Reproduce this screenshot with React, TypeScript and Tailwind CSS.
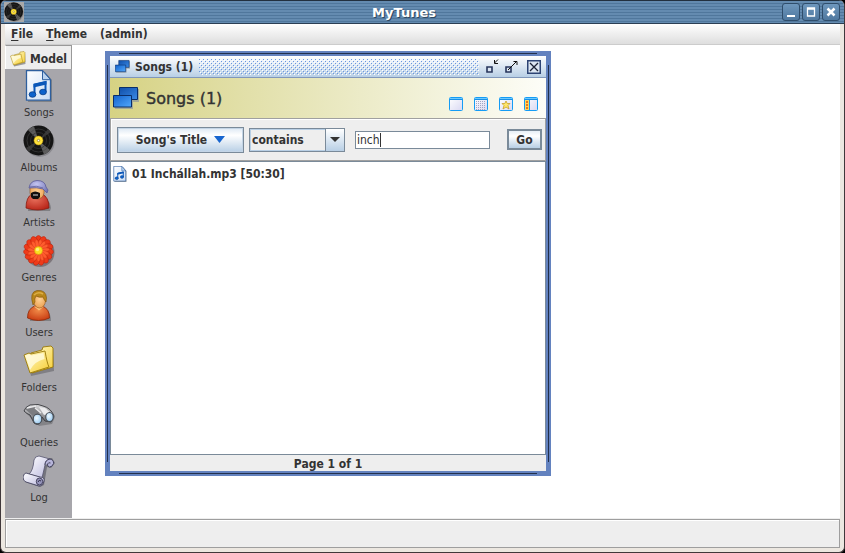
import type { ReactNode } from "react";

function Gradients() {
  return (
    <svg width="0" height="0" className="absolute" aria-hidden="true">
      <defs>
        <linearGradient id="paper" x1="0" y1="0" x2="1" y2="1">
          <stop offset="0" stopColor="#ffffff" />
          <stop offset="1" stopColor="#c9dcf4" />
        </linearGradient>
        <radialGradient id="red" cx=".4" cy=".3" r=".8">
          <stop offset="0" stopColor="#e8705c" />
          <stop offset="1" stopColor="#b52014" />
        </radialGradient>
        <radialGradient id="orange" cx=".5" cy=".3" r=".8">
          <stop offset="0" stopColor="#f08a48" />
          <stop offset="1" stopColor="#c4330c" />
        </radialGradient>
        <radialGradient id="skin" cx=".5" cy=".4" r=".7">
          <stop offset="0" stopColor="#ffd398" />
          <stop offset="1" stopColor="#e89a48" />
        </radialGradient>
        <radialGradient id="cap" cx=".4" cy=".3" r=".8">
          <stop offset="0" stopColor="#c4c5f2" />
          <stop offset="1" stopColor="#6d6fae" />
        </radialGradient>
        <linearGradient id="yellow" x1="0" y1="0" x2="1" y2="1">
          <stop offset="0" stopColor="#fffbd0" />
          <stop offset="1" stopColor="#f7cf35" />
        </linearGradient>
        <linearGradient id="metal" x1="0" y1="0" x2="0" y2="1">
          <stop offset="0" stopColor="#dadadc" />
          <stop offset="1" stopColor="#5d5e63" />
        </linearGradient>
        <radialGradient id="lens" cx=".4" cy=".4" r=".7">
          <stop offset="0" stopColor="#f0faff" />
          <stop offset="1" stopColor="#8fc4f0" />
        </radialGradient>
        <linearGradient id="scroll" x1="0" y1="0" x2="1" y2="1">
          <stop offset="0" stopColor="#ffffff" />
          <stop offset="1" stopColor="#b9b7dd" />
        </linearGradient>
        <linearGradient id="blueback" x1="0" y1="0" x2="1" y2="1">
          <stop offset="0" stopColor="#0f4ea8" />
          <stop offset="1" stopColor="#3b8ae6" />
        </linearGradient>
        <linearGradient id="bluefront" x1="0" y1="0" x2="1" y2="1">
          <stop offset="0" stopColor="#1262cc" />
          <stop offset="1" stopColor="#52a8fb" />
        </linearGradient>
        <linearGradient id="pane" x1="0" y1="0" x2="1" y2="1">
          <stop offset="0" stopColor="#ffffff" />
          <stop offset="1" stopColor="#d9d8f2" />
        </linearGradient>
      </defs>
    </svg>
  );
}

function VinylIcon({ size }: { size: number }) {
  return (
    <svg width={size} height={size} viewBox="0 0 32 32" aria-hidden="true">
      <circle cx="16.6" cy="17" r="15" fill="#77777b" opacity=".6" />
      <circle cx="15.5" cy="15.5" r="15" fill="#151515" />
      <path d="M15.500 15.500L5 5a15 15 0 0 1 6-3.700zM15.500 15.500L27 25a15 15 0 0 1-6 4.500z" fill="#5c5c5c" />
      <path d="M15.500 15.500L25 4l3 3zM15.500 15.500L3 23l3 4z" fill="#383838" />
      <circle cx="15.500" cy="15.500" r="11.500" fill="none" stroke="#444" strokeWidth=".6" />
      <circle cx="15.500" cy="15.500" r="8" fill="none" stroke="#333" strokeWidth=".8" />
      <circle cx="15.500" cy="15.500" r="4.500" fill="#ffe23c" stroke="#b58f00" strokeWidth=".5" />
      <circle cx="15.500" cy="15.500" r="1.200" fill="#fff" stroke="#7a5f00" strokeWidth=".6" />
    </svg>
  );
}

function SongIcon({ size }: { size: number }) {
  return (
    <svg width={size} height={size} viewBox="0 0 32 32" aria-hidden="true">
      <path d="M5 2h17l7 8v22H5z" fill="#666a70" opacity=".6" />
      <path d="M3.500.700h16l8 9v20.500h-24z" fill="url(#paper)" stroke="#2e5f9e" strokeWidth="1.300" />
      <path d="M19.500.700v9h8z" fill="#b9d2ee" stroke="#2e5f9e" />
      <path d="M11.500 24V14.500L22.500 12v10" fill="none" stroke="#0b57b8" strokeWidth="2" />
      <path d="M10.500 14l13-3v3.500l-13 3z" fill="#0b57b8" />
      <ellipse cx="9.500" cy="24.500" rx="3.400" ry="2.800" fill="#0c62cc" stroke="#083c86" strokeWidth=".8" />
      <ellipse cx="20" cy="22" rx="3.400" ry="2.800" fill="#0c62cc" stroke="#083c86" strokeWidth=".8" />
    </svg>
  );
}

function ArtistIcon() {
  return (
    <svg width="32" height="32" viewBox="0 0 32 32" aria-hidden="true">
      <path d="M5 31q0-12 9-14 13 0 14 11l-1 3z" fill="#606064" opacity=".55" />
      <path d="M3 28Q3 17 9 14h10q7 3 7 14-11 4-23 0z" fill="url(#red)" stroke="#8a1c10" strokeWidth=".8" />
      <path d="M7 7h14v6q-1 6-7 6t-7-6z" fill="url(#skin)" stroke="#8b5120" strokeWidth=".6" />
      <path d="M6 8Q7 1 14 .500q8 0 9 6.500l2 3-1 3-4-4q-6-2-14-1z" fill="url(#cap)" stroke="#5a5b99" strokeWidth=".8" />
      <path d="M7 7q6-2 13 1" fill="none" stroke="#5f61a0" strokeWidth=".8" />
      <path d="M8 13q4-3 9 0v4l-2 2h-5l-2-2z" fill="#120f0e" />
      <path d="M10 15h5" stroke="#d8d8d8" strokeWidth="1.200" />
    </svg>
  );
}

const petals = [0, 24, 48, 72, 96, 120, 144, 168, 192, 216, 240, 264, 288, 312, 336];

function GenreIcon() {
  return (
    <svg width="32" height="32" viewBox="0 0 32 32" aria-hidden="true">
      <circle cx="17" cy="17.500" r="14.500" fill="#6b6366" opacity=".7" />
      {petals.map((a) => (
        <ellipse key={a} cx="15.500" cy="6" rx="3.500" ry="5.500" fill="#ee3a1a" stroke="#b91f08" strokeWidth=".5" transform={`rotate(${a} 15.500 15.500)`} />
      ))}
      {petals.map((a) => (
        <ellipse key={a} cx="15.500" cy="9" rx="1.800" ry="4.500" fill="#ff5c2e" stroke="#d23a16" strokeWidth=".4" transform={`rotate(${a + 12} 15.500 15.500)`} />
      ))}
      <circle cx="15.500" cy="15.500" r="4" fill="#f9df21" stroke="#d79a05" strokeWidth=".6" />
      <circle cx="14.500" cy="14.500" r="1.700" fill="#fff27a" />
    </svg>
  );
}

function UserIcon() {
  return (
    <svg width="32" height="32" viewBox="0 0 32 32" aria-hidden="true">
      <path d="M7 31q0-12 9-14 12 1 12 14z" fill="#606064" opacity=".55" />
      <path d="M4.500 28q0-9 7-12h8q7 3 7 12-11 5-22 0z" fill="url(#orange)" stroke="#8c2808" strokeWidth=".8" />
      <path d="M11 16.500l5 4 5-4z" fill="#fbc27a" />
      <ellipse cx="16.500" cy="10.500" rx="6" ry="7.500" fill="url(#skin)" stroke="#955419" strokeWidth=".6" />
      <path d="M10 15Q6 2 14 .500q9-1 9.500 7.500l-.5 4q-2-2-3-5-4 1-7-1-2 3-1 6z" fill="#b8861a" stroke="#7f5307" strokeWidth=".6" />
      <path d="M11 5q4-4 9-1" fill="none" stroke="#dcae44" strokeWidth="1.500" />
    </svg>
  );
}

function FolderIcon({ size }: { size: number }) {
  return (
    <svg width={size} height={size} viewBox="0 0 32 32" aria-hidden="true">
      <path d="M4 12l17-5 1-4 8 1 1 22-23 5z" fill="#66666a" opacity=".6" />
      <path d="M8 8l11-3 1-3 8-1 2 2v19L9 28z" fill="url(#yellow)" stroke="#9a7808" strokeWidth=".9" />
      <path d="M1 10l5-2 2 1 14-3q2 12 4 16L7 28z" fill="url(#yellow)" stroke="#9a7808" strokeWidth=".9" />
      <path d="M2.500 10.500l4-1 2 1 12-2.500 1 6Q12 16 7 25z" fill="#fffbe0" opacity=".8" />
    </svg>
  );
}

function QueryIcon() {
  return (
    <svg width="32" height="32" viewBox="0 0 32 32" aria-hidden="true">
      <path d="M3 13l18-6 11 10-3 7-13 2z" fill="#606064" opacity=".5" />
      <path d="M1 11q1-4 6-6l8-.500 5 1.500q8 2 11 10l-3 6-6-1-3-4-1 5q-3 4-7 1l-4-8q-3-1-6-4z" fill="url(#metal)" stroke="#37383c" strokeWidth=".9" />
      <path d="M2 9l9-3 6 7-7 3z" fill="#7b7c80" />
      <path d="M16 7l6 1 6 5-7 2z" fill="#ececee" />
      <path d="M4 8l9-2M12 8l6 5" stroke="#e8e8ea" strokeWidth="1.400" />
      <ellipse cx="14.500" cy="19" rx="4.300" ry="4.800" fill="url(#lens)" stroke="#4b5158" strokeWidth="1.200" />
      <ellipse cx="26.500" cy="17" rx="3.800" ry="4.500" fill="url(#lens)" stroke="#4b5158" strokeWidth="1.200" />
    </svg>
  );
}

function LogIcon() {
  return (
    <svg width="32" height="32" viewBox="0 0 32 32" aria-hidden="true">
      <path d="M13 3h16l3 5-4 5-4-1-3 18-4 2-15-5 2-5 6 1z" fill="#4b4b57" opacity=".55" />
      <path d="M11 5q1-4 5-4l11 3q-5 1-5 6l-3 13-13-4q4-3 5-14z" fill="url(#scroll)" stroke="#56546f" strokeWidth=".8" />
      <path d="M22 10q0-5 5-6 4 1 3.500 4.500-1 3.500-4 3.500-2.500-.500-2-3 1-2 3-1" fill="#b7b5da" stroke="#474661" />
      <path d="M3 18l14 4q5 0 4 4-1 5-5 5L3 27q-3-1-3-5 1-4 3-4z" fill="url(#scroll)" stroke="#474661" strokeWidth=".9" />
      <ellipse cx="16.500" cy="26.500" rx="3.200" ry="3.500" fill="#9795bd" stroke="#393851" strokeWidth=".9" />
      <path d="M15 27q1-3 3-1" fill="none" stroke="#2f2e48" />
    </svg>
  );
}

function WindowsIcon({ size }: { size: number }) {
  return (
    <svg width={size} height={size} viewBox="0 0 26 26" aria-hidden="true">
      <path d="M8 4h18v13H8zM2 12h18v12H2z" fill="#8e979d" opacity=".7" />
      <path d="M6.500 2.500h18v12h-18z" fill="url(#blueback)" stroke="#0a2e69" />
      <path d="M.500 10.500h18v11.500H.500z" fill="url(#bluefront)" stroke="#0a2e69" />
    </svg>
  );
}

type ViewKind = "blank" | "grid" | "star" | "detail";

function ViewIcon({ kind }: { kind: ViewKind }) {
  return (
    <svg width="14" height="14" viewBox="0 0 14 14" aria-hidden="true">
      <rect x=".5" y=".5" width="13" height="13" rx="1" fill="url(#pane)" stroke="#159cf5" />
      <path d="M1 1h12v1H1z" fill="#6ccaff" />
      <path d="M1 2h12v1H1z" fill="#1a8fe6" />
      {kind === "grid" && <path d="M2 4.500h10M2 6.500h10M2 8.500h10M2 10.500h10M2 12.500h10" stroke="#a3a5c4" strokeDasharray="1 1" />}
      {kind === "star" && <path d="M7 4l1.200 2.500H11L9 8.500l1 3.500-3-2-3 2 1-3.500-2-2h2.800z" fill="#ffe76a" stroke="#c9a028" strokeWidth=".8" />}
      {kind === "detail" && (
        <>
          <path d="M1 3h4v10H1z" fill="#ffd65c" />
          <path d="M2 4h2v2H2zM2 7h2v2H2zM2 10h2v2H2z" fill="#e77822" />
          <path d="M5.500 3v10" stroke="#159cf5" />
        </>
      )}
    </svg>
  );
}

const sections: { name: string; icon: ReactNode }[] = [
  { name: "Songs", icon: <SongIcon size={32} /> },
  { name: "Albums", icon: <VinylIcon size={32} /> },
  { name: "Artists", icon: <ArtistIcon /> },
  { name: "Genres", icon: <GenreIcon /> },
  { name: "Users", icon: <UserIcon /> },
  { name: "Folders", icon: <FolderIcon size={32} /> },
  { name: "Queries", icon: <QueryIcon /> },
  { name: "Log", icon: <LogIcon /> },
];

const views: { kind: ViewKind; label: string }[] = [
  { kind: "blank", label: "Plain view" },
  { kind: "grid", label: "Grid view" },
  { kind: "star", label: "Favourites view" },
  { kind: "detail", label: "Detail view" },
];

const captions: { label: string; icon: ReactNode }[] = [
  { label: "Minimize", icon: <path d="M4 11h8v2H4z" fill="#fff" /> },
  { label: "Maximize", icon: <path d="M4.500 4h7v8h-7zM4 5h8" fill="none" stroke="#fff" strokeWidth="1.300" /> },
  { label: "Close", icon: <path d="M4.500 4.500l7 7M11.500 4.500l-7 7" stroke="#fff" strokeWidth="2.500" /> },
];

function TitleBar() {
  return (
    <header className="flex h-6 shrink-0 items-center justify-between border-t border-b border-t-[#22303f] border-b-[#2b3f54] bg-[repeating-linear-gradient(to_bottom,#648bb0_0px,#648bb0_2px,#50779c_2px,#50779c_3px)] pr-1 pl-[3px]">
      <span className="flex size-5 items-center justify-center bg-[#a9a9a9]">
        <VinylIcon size={20} />
      </span>
      <h1 className="flex-1 pt-[2px] pl-[2px] text-center font-['DejaVu_Sans',sans-serif] text-[13px] font-bold text-white [text-shadow:1px_1px_0_#2f4861]">MyTunes</h1>
      <div className="flex gap-[2px]">
        {captions.map((c) => (
          <button key={c.label} aria-label={c.label} className="flex size-[18px] items-center justify-center rounded-[3px] border border-[#2f4d6b] bg-linear-to-b from-[#6e97bd] to-[#4f789f]">
            <svg width="16" height="16" viewBox="0 0 16 16" aria-hidden="true">{c.icon}</svg>
          </button>
        ))}
      </div>
    </header>
  );
}

function MenuBar() {
  return (
    <nav className="flex h-[21px] shrink-0 items-center gap-[13px] border-b border-[#ccc] bg-linear-to-b from-white to-[#dedede] px-[6px]">
      <button><span className="underline underline-offset-2">F</span>ile</button>
      <button><span className="underline underline-offset-2">T</span>heme</button>
      <button>(admin)</button>
    </nav>
  );
}

function Sidebar() {
  return (
    <aside className="flex w-[67px] shrink-0 flex-col bg-[#a7a6ab]">
      <button className="flex h-6 shrink-0 items-center gap-1 border-t border-r border-l border-t-[#999] border-r-[#999] border-l-white bg-[#eee] pt-[2px] pl-1">
        <FolderIcon size={16} />
        Model
      </button>
      <ul>
        {sections.map((s) => (
          <li key={s.name} className="h-[55px]">
            <button className="flex w-full flex-col items-center pt-px pl-px text-[11px] leading-[22px] font-normal">
              {s.icon}
              <span>{s.name}</span>
            </button>
          </li>
        ))}
      </ul>
    </aside>
  );
}

function SongsWindow() {
  return (
    <section aria-label="Songs" className="absolute top-[6px] left-[33px] flex h-[425px] w-[446px] flex-col bg-[#6382bf] p-[5px]">
      <span className="absolute top-[2px] right-[14px] left-[14px] h-px bg-[#22304c]" />
      <span className="absolute right-[14px] bottom-[2px] left-[14px] h-px bg-[#22304c]" />
      <span className="absolute top-[14px] bottom-[14px] left-[2px] w-px bg-[#22304c]" />
      <span className="absolute top-[14px] right-[2px] bottom-[14px] w-px bg-[#22304c]" />
      <header className="flex h-[22px] shrink-0 items-center border-b border-[#8097ba] bg-linear-to-b from-white to-[#b8cfe5] pr-[5px] pl-[5px]">
        <WindowsIcon size={15} />
        <h2 className="pr-[6px] pl-[5px]">Songs (1)</h2>
        <svg className="h-4 min-w-0 flex-1" aria-hidden="true" shapeRendering="crispEdges">
          <defs>
            <pattern id="grip" width="4" height="4" patternUnits="userSpaceOnUse">
              <path d="M0 0h1v1H0zM2 2h1v1H2z" fill="#6a96e0" />
              <path d="M1 1h1v1H1zM3 3h1v1H3z" fill="#fff" />
            </pattern>
          </defs>
          <rect width="100%" height="100%" fill="url(#grip)" />
        </svg>
        <div className="flex items-center gap-1 pl-1">
          <button aria-label="Minimize Songs">
            <svg width="16" height="16" viewBox="0 0 16 16" aria-hidden="true">
              <path d="M4 8h5v5H4z" fill="#dce6f2" stroke="#27365c" strokeWidth="1.600" />
              <path d="M15 .500l-3.500 3.500M11.500 1v3.500H15" fill="none" stroke="#111" />
            </svg>
          </button>
          <button aria-label="Maximize Songs">
            <svg width="16" height="16" viewBox="0 0 16 16" aria-hidden="true">
              <path d="M3 8h5v5H3z" fill="#dce6f2" stroke="#27365c" strokeWidth="1.600" />
              <path d="M5 11l8.500-8.500M10.500 2.500h3.500V6" fill="none" stroke="#111" />
            </svg>
          </button>
          <button aria-label="Close Songs" className="ml-1">
            <svg width="14" height="14" viewBox="0 0 14 14" aria-hidden="true">
              <path d="M.750.750h12.500v12.500H.750z" fill="#dce6f2" stroke="#2d4474" strokeWidth="1.500" />
              <path d="M3 3l8 8M11 3l-8 8" stroke="#1c2336" strokeWidth="1.300" />
            </svg>
          </button>
        </div>
      </header>
      <div className="flex h-10 shrink-0 items-center bg-linear-to-r from-[#d6d283] to-[#fdfdf8] pr-2 pl-[3px]">
        <WindowsIcon size={26} />
        <h2 className="flex-1 pt-px pl-[7px] font-['DejaVu_Sans',sans-serif] text-[16px] font-normal [-webkit-text-stroke:0.400px_#333]">Songs (1)</h2>
        <div className="flex gap-[11px] pt-[12px]">
          {views.map((v) => (
            <button key={v.kind} aria-label={v.label}><ViewIcon kind={v.kind} /></button>
          ))}
        </div>
      </div>
      <form className="flex h-[43px] shrink-0 items-center border border-[#a0a0a0] bg-[#eee] pr-[3px] pl-[6px] shadow-[inset_1px_1px_0_#fff]" onSubmit={(e) => e.preventDefault()}>
        <button type="button" className="flex h-[26px] w-[127px] items-center justify-center gap-[7px] border border-[#7a8a99] bg-linear-to-b from-[#dde8f3] via-white via-30% to-[#b8cfe5] shadow-[inset_0_0_0_1px_#c4d5e6]">
          Song's Title
          <svg width="11" height="7" viewBox="0 0 11 7" aria-hidden="true"><path d="M0 0h11L5.500 7z" fill="#1765cf" /></svg>
        </button>
        <div className="relative ml-[5px]">
          <select aria-label="Comparison" className="block h-6 w-24 appearance-none border border-[#7a8a99] bg-[#eee] pl-[2px] shadow-[inset_0_0_0_1px_#b8cfe5]">
            <option>contains</option>
          </select>
          <span className="pointer-events-none absolute top-px right-px bottom-px flex w-[19px] items-center justify-center border-l border-[#7a8a99] bg-linear-to-b from-white to-[#b8cfe5]">
            <svg width="10" height="5" viewBox="0 0 10 5" aria-hidden="true"><path d="M0 0h10L5 5z" fill="#333" /></svg>
          </span>
        </div>
        <div className="relative mr-[17px] ml-[10px] min-w-0 flex-1">
          <input aria-label="Search text" defaultValue="inch" className="block h-[18px] w-full border border-[#7a8a99] bg-white pl-px font-normal outline-none" />
          <span className="pointer-events-none absolute top-[2px] left-[25px] h-[14px] w-px bg-[#333]" />
        </div>
        <button type="submit" className="h-[21px] w-[35px] border-2 border-[#7a8a99] bg-linear-to-b from-[#e6eef6] via-white via-30% to-[#b8cfe5] leading-4">Go</button>
      </form>
      <ul className="min-h-0 flex-1 border border-[#7a8a99] bg-white px-px pt-[3px]">
        <li className="flex h-[17px] items-center gap-1">
          <SongIcon size={16} />
          01 Inchállah.mp3 [50:30]
        </li>
      </ul>
      <footer className="h-4 shrink-0 bg-[#eee] text-center leading-[18px]">Page 1 of 1</footer>
    </section>
  );
}

export default function App() {
  return (
    <div className="min-h-screen bg-black">
      <Gradients />
      <div className="flex min-h-screen flex-col overflow-hidden rounded-[6px] border-r border-b border-l border-[#40383a] bg-[#ece7e0] font-['DejaVu_Sans_Condensed','DejaVu_Sans',sans-serif] text-[12px] font-bold text-[#333]">
        <TitleBar />
        <div className="mr-1 mb-1 ml-1 flex flex-1 flex-col bg-[#eee]">
          <MenuBar />
          <div className="flex flex-1">
            <Sidebar />
            <main className="relative flex-1 bg-white">
              <SongsWindow />
            </main>
          </div>
          <footer className="mt-px h-[29px] shrink-0 border border-[#9e9e9e] shadow-[inset_1px_1px_0_#fff]" />
        </div>
      </div>
    </div>
  );
}
